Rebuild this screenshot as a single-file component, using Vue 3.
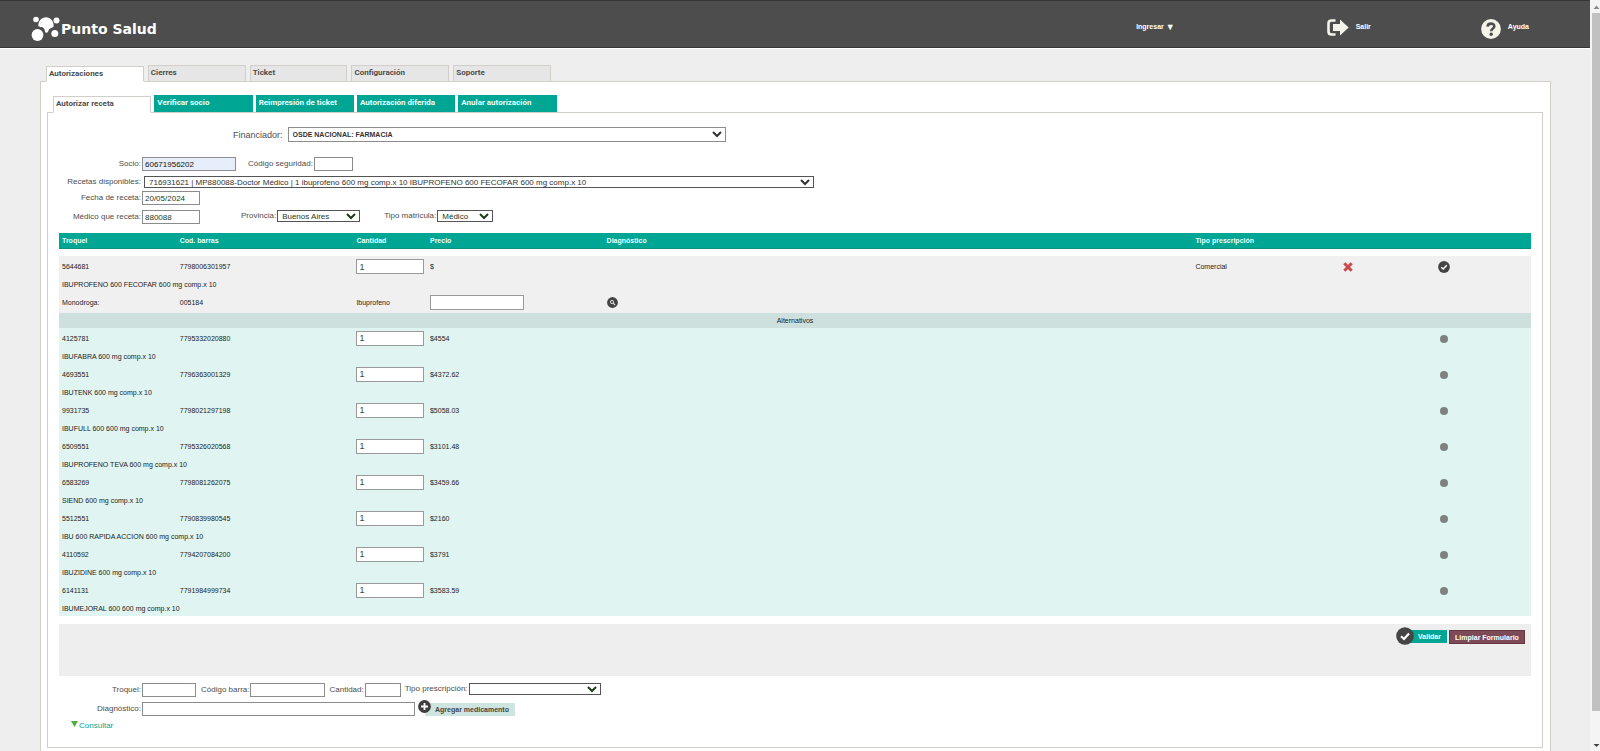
<script setup>
import { ref } from 'vue'

const mainTabs = ['Autorizaciones', 'Cierres', 'Ticket', 'Configuración', 'Soporte']
const subTabs = ['Autorizar receta', 'Verificar socio', 'Reimpresión de ticket', 'Autorización diferida', 'Anular autorización']
const columns = ['Troquel', 'Cod. barras', 'Cantidad', 'Precio', 'Diagnóstico', 'Tipo prescripción', '', '', '']

const alternatives = ref([
  { troquel: '4125781', code: '7795332020880', qty: '1', price: '$4554', name: 'IBUFABRA 600 mg comp.x 10' },
  { troquel: '4693551', code: '7796363001329', qty: '1', price: '$4372.62', name: 'IBUTENK 600 mg comp.x 10' },
  { troquel: '9931735', code: '7798021297198', qty: '1', price: '$5058.03', name: 'IBUFULL 600 600 mg comp.x 10' },
  { troquel: '6509551', code: '7795326020568', qty: '1', price: '$3101.48', name: 'IBUPROFENO TEVA 600 mg comp.x 10' },
  { troquel: '6583269', code: '7798081262075', qty: '1', price: '$3459.66', name: 'SIEND 600 mg comp.x 10' },
  { troquel: '5512551', code: '7790839980545', qty: '1', price: '$2160', name: 'IBU 600 RAPIDA ACCION 600 mg comp.x 10' },
  { troquel: '4110592', code: '7794207084200', qty: '1', price: '$3791', name: 'IBUZIDINE 600 mg comp.x 10' },
  { troquel: '6141131', code: '7791984999734', qty: '1', price: '$3583.59', name: 'IBUMEJORAL 600 600 mg comp.x 10' }
])
const socio = ref('60671956202')
const fecha = ref('20/05/2024')
const medico = ref('880088')
const cantidad = ref('1')
</script>

<template>
  <div class="shell">
    <div class="page">
      <header class="topbar">
        <a class="brand" href="#">
          <svg width="30" height="26" viewBox="0 0 30 26" fill="#fff" aria-hidden="true">
            <circle cx="5" cy="3.500" r="2.800" />
            <circle cx="25.500" cy="4.500" r="3" />
            <circle cx="6.500" cy="19" r="5.900" />
            <circle cx="23.800" cy="17.500" r="3.500" />
            <path d="M7.300 10C7.300 5 10.500 1.300 15 1.300S22.700 5 22.700 9.500C22.700 12 19.500 11.500 18 13.500C17 15 17.200 16.800 15.400 16.800S14.400 14 12.500 12C11 10.500 8.500 12 7.300 10Z" />
          </svg>
          <span>Punto Salud</span>
        </a>
        <nav class="links">
          <a href="#" class="enter"><span>Ingresar</span><span class="caret">▼</span></a>
          <a href="#" class="exit">
            <svg width="22" height="17" viewBox="0 0 22 17" aria-hidden="true">
              <path d="M8.500 1.500H4.500Q1.500 1.500 1.500 4.500V12.500Q1.500 15.500 4.500 15.500H8.500" fill="none" stroke="#f4f4ea" stroke-width="2.600" />
              <path d="M6 5H13V0.500L21.700 8.500L13 16.500V12H6Z" fill="#f4f4ea" />
            </svg>
            <span>Salir</span>
          </a>
          <a href="#" class="help">
            <svg width="20" height="20" viewBox="0 0 20 20" aria-hidden="true">
              <circle cx="10" cy="10" r="9.900" fill="#f4f4ea" />
              <path d="M6.600 7.600C6.700 3.600 13.500 3.700 13.300 7.500C13.200 9.700 10.300 9.500 10.200 12.200" fill="none" stroke="#4d4d4d" stroke-width="2.600" />
              <circle cx="10.200" cy="15.300" r="1.700" fill="#4d4d4d" />
            </svg>
            <span>Ayuda</span>
          </a>
        </nav>
      </header>

      <main class="content">
        <nav class="tabs main-tabs">
          <a v-for="(t, i) in mainTabs" :key="t" href="#" :class="{ active: i === 0 }">{{ t }}</a>
        </nav>
        <section class="panel outer">
          <nav class="tabs sub-tabs">
            <a v-for="(t, i) in subTabs" :key="t" href="#" :class="{ active: i === 0 }">{{ t }}</a>
          </nav>
          <section class="panel inner">
            <form class="search" @submit.prevent>
              <div class="row financier">
                <label for="fin">Financiador:</label>
                <select id="fin"><option>OSDE NACIONAL: FARMACIA</option></select>
              </div>
              <div class="row member">
                <label class="lead" for="socio">Socio:</label>
                <input id="socio" v-model="socio" class="w-member filled" type="text">
                <label class="next" for="seg">Código seguridad:</label>
                <input id="seg" class="w-code" type="text">
              </div>
              <div class="row recipes">
                <label class="lead" for="rec">Recetas disponibles:</label>
                <select id="rec"><option>716931621 | MP880088-Doctor Médico | 1 ibuprofeno 600 mg comp.x 10 IBUPROFENO 600 FECOFAR 600 mg comp.x 10</option></select>
              </div>
              <div class="row date">
                <label class="lead" for="fecha">Fecha de receta:</label>
                <input id="fecha" v-model="fecha" class="w-date green" type="text">
              </div>
              <div class="row doctor">
                <label class="lead" for="medico">Médico que receta:</label>
                <input id="medico" v-model="medico" class="w-date green" type="text">
                <span class="pair province">
                  <label for="prov">Provincia:</label>
                  <select id="prov" class="green"><option>Buenos Aires</option></select>
                </span>
                <span class="pair licence">
                  <label for="mat">Tipo matricula:</label>
                  <select id="mat" class="green"><option>Médico</option></select>
                </span>
              </div>
            </form>

            <table class="items">
              <colgroup>
                <col class="c8"><col class="c12"><col class="c5"><col class="c12"><col class="c40"><col class="c10"><col class="c4"><col class="c6"><col class="c3">
              </colgroup>
              <thead>
                <tr><th v-for="(c, i) in columns" :key="i" scope="col">{{ c }}</th></tr>
              </thead>
              <tbody class="spacer"><tr><td colspan="9"></td></tr></tbody>
              <tbody class="chosen">
                <tr class="tall">
                  <td>5644681</td>
                  <td>7798006301957</td>
                  <td><input v-model="cantidad" class="qty" type="text" aria-label="Cantidad"></td>
                  <td>$</td>
                  <td></td>
                  <td>Comercial</td>
                  <td>
                    <button class="icon" type="button" aria-label="Quitar">
                      <svg width="10" height="10" viewBox="0 0 10 10"><path d="M1.300 1.300L8.700 8.700M8.700 1.300L1.300 8.700" stroke="#c84a4a" stroke-width="3" /></svg>
                    </button>
                  </td>
                  <td class="mid">
                    <button class="icon" type="button" aria-label="Seleccionado">
                      <svg width="12" height="12" viewBox="0 0 12 12"><circle cx="6" cy="6" r="5.900" fill="#444" /><path d="M3.300 6.200L5.200 8L8.800 4.200" fill="none" stroke="#fff" stroke-width="1.500" /></svg>
                    </button>
                  </td>
                  <td></td>
                </tr>
                <tr class="short"><td colspan="9">IBUPROFENO 600 FECOFAR 600 mg comp.x 10</td></tr>
                <tr class="tall">
                  <td>Monodroga:</td>
                  <td>005184</td>
                  <td>Ibuprofeno</td>
                  <td><input class="price" type="text" aria-label="Precio"></td>
                  <td>
                    <button class="icon" type="button" aria-label="Buscar diagnóstico">
                      <svg width="11" height="11" viewBox="0 0 11 11"><circle cx="5.500" cy="5.500" r="5.400" fill="#444" /><circle cx="5" cy="5" r="1.600" fill="none" stroke="#ddd" /><path d="M6.200 6.200L8 8" stroke="#ddd" stroke-width="1.200" /></svg>
                    </button>
                  </td>
                  <td colspan="4"></td>
                </tr>
              </tbody>
              <tbody class="divider"><tr><th colspan="9" scope="colgroup">Alternativos</th></tr></tbody>
              <tbody class="alts">
                <template v-for="a in alternatives" :key="a.troquel">
                  <tr class="first">
                    <td>{{ a.troquel }}</td>
                    <td>{{ a.code }}</td>
                    <td><input v-model="a.qty" class="qty" type="text" :aria-label="'Cantidad ' + a.name"></td>
                    <td>{{ a.price }}</td>
                    <td colspan="3"></td>
                    <td class="mid"><button class="icon dot" type="button" :aria-label="'Elegir ' + a.name"></button></td>
                    <td></td>
                  </tr>
                  <tr class="second"><td colspan="9">{{ a.name }}</td></tr>
                </template>
              </tbody>
            </table>

            <div class="actions">
              <button class="validate" type="button">
                <svg width="18" height="18" viewBox="0 0 18 18" aria-hidden="true"><circle cx="9" cy="9" r="8.800" fill="#444" /><path d="M5 9.200L8 12L13 6.400" fill="none" stroke="#fff" stroke-width="2.200" /></svg>
                <span>Validar</span>
              </button>
              <button class="clear" type="button">Limpiar Formulario</button>
            </div>

            <form class="add" @submit.prevent>
              <div class="row add-top">
                <label class="lead" for="troq">Troquel:</label>
                <input id="troq" class="w-troq" type="text">
                <span class="pair bar"><label for="barra">Código barra:</label><input id="barra" class="w-bar" type="text"></span>
                <span class="pair amount"><label for="cant">Cantidad:</label><input id="cant" class="w-amount" type="text"></span>
                <span class="pair kind"><label for="tipo">Tipo prescripción:</label><select id="tipo" class="green"><option></option></select></span>
              </div>
              <div class="row add-bottom">
                <label class="lead" for="diag">Diagnóstico:</label>
                <input id="diag" class="w-diag" type="text">
                <button class="append" type="button">
                  <svg width="13" height="13" viewBox="0 0 13 13" aria-hidden="true"><circle cx="6.500" cy="6.500" r="6.400" fill="#3e3e3e" /><path d="M6.500 3V10M3 6.500H10" stroke="#fff" stroke-width="1.800" /></svg>
                  <span>Agregar medicamento</span>
                </button>
              </div>
            </form>
            <a class="consult" href="#">
              <svg width="7" height="6" viewBox="0 0 7 6" aria-hidden="true"><path d="M0 0H7L3.500 6Z" fill="#4fae3c" /></svg>
              <span>Consultar</span>
            </a>
          </section>
        </section>
      </main>
    </div>

    <div class="scrollbar" aria-hidden="true">
      <svg width="8" height="13" viewBox="0 0 8 13"><path d="M1.500 9L4.500 5.500L7.500 9Z" fill="#8a8a8a" /></svg>
      <div class="thumb"></div>
      <svg width="8" height="13" viewBox="0 0 8 13"><path d="M1.500 6L4.500 9L7.500 6Z" fill="#444" /></svg>
    </div>
  </div>
</template>

<style>
body { background: #eee; }
</style>

<style scoped>
* { box-sizing: border-box; }
.shell {
  display: flex;
  height: 100vh;
  overflow: hidden;
  font-family: "Liberation Sans", Arial, sans-serif;
  font-size: 8px;
  line-height: 10px;
  color: #4d4d4d;
  background: #eee;
}
.page { flex: 1; min-width: 0; display: flex; flex-direction: column; }
a { color: inherit; text-decoration: none; }
svg { display: block; flex: none; }
label, .tabs a { white-space: nowrap; }

.topbar {
  flex: none;
  display: flex;
  justify-content: space-between;
  height: 48px;
  padding: 0 61px 0 31px;
  border-top: 1px solid #383434;
  border-bottom: 1px solid #383434;
  box-shadow: 0 1px 0 #fff;
  background: #4d4d4d;
  color: #fff;
}
.brand {
  display: flex;
  align-items: center;
  padding-top: 9px;
  font: bold 14px/18px "DejaVu Sans", sans-serif;
}
.links { display: flex; font-size: 7px; font-weight: bold; }
.links a { display: flex; align-items: center; gap: 7px; height: 20px; margin-top: 16px; }
.links .enter { gap: 2px; margin-right: 152px; }
.caret { font-size: 9px; }
.links .exit { margin-right: 110px; }
.links .help svg { margin-top: 4px; }

.content { flex: 1; padding: 17px 39px 0 40px; min-height: 0; display: flex; flex-direction: column; }
.tabs {
  display: flex;
  gap: 4px;
  padding-left: 6px;
  align-items: flex-end;
  font-family: Roboto, "Liberation Sans", Arial, sans-serif;
  font-weight: bold;
}
.tabs a { position: relative; z-index: 1; margin-bottom: -1px; }
.main-tabs a {
  flex: 0 0 6.5%;
  height: 17px;
  padding: 2px;
  border: 1px solid #d2cfcb;
  background: #e6e6e6;
}
.main-tabs a.active { height: 16px; background: #fff; border-bottom-color: #fff; }
.panel { border: 1px solid #d2cfcb; background: #fff; }
.outer { flex: 1 0 auto; padding: 13px 7px 0 6px; border-bottom: 0; }
.sub-tabs { gap: 3px; }
.sub-tabs a { flex: 0 0 6.6%; height: 17px; padding: 3px; background: #00a694; color: #e8fffa; margin-bottom: 0; }
.sub-tabs a.active {
  height: 17px;
  padding: 2px;
  margin-bottom: -1px;
  border: 1px solid #d2cfcb;
  border-bottom-color: #fff;
  background: #fff;
  color: #4d4d4d;
}
.inner { padding: 14px 11px 16px; }

input, select {
  margin: 0;
  font: inherit;
  color: #333;
  border: 1px solid #8c8c8c;
  border-radius: 0;
  background: #fff;
}
input { height: 14px; padding: 0 2px; }
select { height: 12px; padding: 0; border-color: #555; }
.green { color: #1d3a1d; }
.row { display: flex; align-items: center; }
.lead { width: 82px; margin-right: 1px; text-align: right; flex: none; }
.pair { display: flex; align-items: center; gap: 1px; }

.financier { margin-left: 174px; gap: 5px; font-size: 9px; }
.financier select { width: 438px; height: 15px; font-size: 7px; font-weight: bold; border-color: #8c8c8c; }
.member { margin-top: 15px; }
.w-member { width: 94px; }
.filled { background: #e6eefc; color: #111; }
.next { margin: 0 1px 0 12px; }
.w-code { width: 39px; }
.recipes { margin-top: 5px; }
.recipes select { width: 670px; margin-left: 2px; }
.date { margin-top: 3px; }
.w-date { width: 58px; }
.doctor { margin-top: 5px; }
.doctor .pair { align-self: flex-start; }
.province { margin-left: 41px; }
.province select { width: 83px; }
.licence { margin-left: 24px; }
.licence select { width: 56px; }

.items {
  width: 100%;
  margin-top: 9px;
  table-layout: fixed;
  border-collapse: collapse;
  font-size: 7px;
  line-height: 9px;
  color: #222;
}
.c3 { width: 3%; } .c4 { width: 4%; } .c5 { width: 5%; } .c6 { width: 6%; } .c8 { width: 8%; }
.c10 { width: 10%; } .c12 { width: 12%; } .c40 { width: 40%; }
.items td, .items th { padding: 0 3px; text-align: left; vertical-align: middle; }
.items thead { background: #00a694; color: #e8fffa; }
.items thead th { height: 15px; border-bottom: 1px solid #078f80; }
.items .spacer td { height: 8px; }
.items .chosen { background: #f0f0f0; }
.items .tall td { height: 21px; }
.items .short td { height: 15px; }
.items .divider th { height: 15px; background: #cee0de; font-weight: normal; text-align: center; }
.items .alts { background: #e0f4f1; }
.items .first td { height: 20px; }
.items .second td { height: 16px; }
.items td.mid { padding: 0 0 0 2px; text-align: center; }
.items input { display: block; height: 15px; border: 1px solid #999; font-size: 9px; }
.items .qty { width: 100%; color: #3c4a1a; }
.items .price { width: 94px; }
.icon { display: inline-block; vertical-align: middle; padding: 0; border: 0; background: none; }
.dot { width: 8px; height: 8px; border-radius: 50%; background: #808080; }

.actions {
  display: flex;
  justify-content: flex-end;
  align-items: flex-start;
  gap: 2px;
  height: 52px;
  margin-top: 8px;
  padding: 6px 6px 0 0;
  background: #eee;
}
.actions button, .append { font: bold 7px/9px "Liberation Sans", Arial, sans-serif; border: 0; }
.validate { position: relative; margin-left: 9px; width: 42px; height: 13px; padding: 0 6px 0 13px; background: #00a694; color: #fff; }
.validate svg { position: absolute; left: -9px; top: -3px; }
.actions .clear { height: 14px; width: 76px; padding: 0; background: #7d4b58; border: 1px solid #6a3643; color: #fff; }

.add-top { margin-top: 7px; }
.w-troq { width: 54px; }
.bar { margin-left: 5px; }
.w-bar { width: 75px; }
.amount { margin-left: 4px; }
.w-amount { width: 36px; }
.kind { margin-left: 4px; align-self: flex-start; }
.kind select { width: 132px; }
.add-bottom { margin-top: 5px; }
.w-diag { width: 273px; }
.append { position: relative; width: 90px; height: 13px; margin-left: 10px; padding: 0 0 0 4px; background: #cee4e1; color: #444; }
.append svg { position: absolute; left: -7px; top: -3px; }
.consult { display: flex; width: max-content; gap: 1px; margin: 5px 0 0 12px; color: #00a694; }

.scrollbar {
  flex: none;
  width: 10px;
  display: flex;
  flex-direction: column;
  align-items: flex-end;
  background: #f4f4f4;
}
.thumb { flex: 1; width: 8px; margin-bottom: 27px; background: #c1c1c1; }
</style>
